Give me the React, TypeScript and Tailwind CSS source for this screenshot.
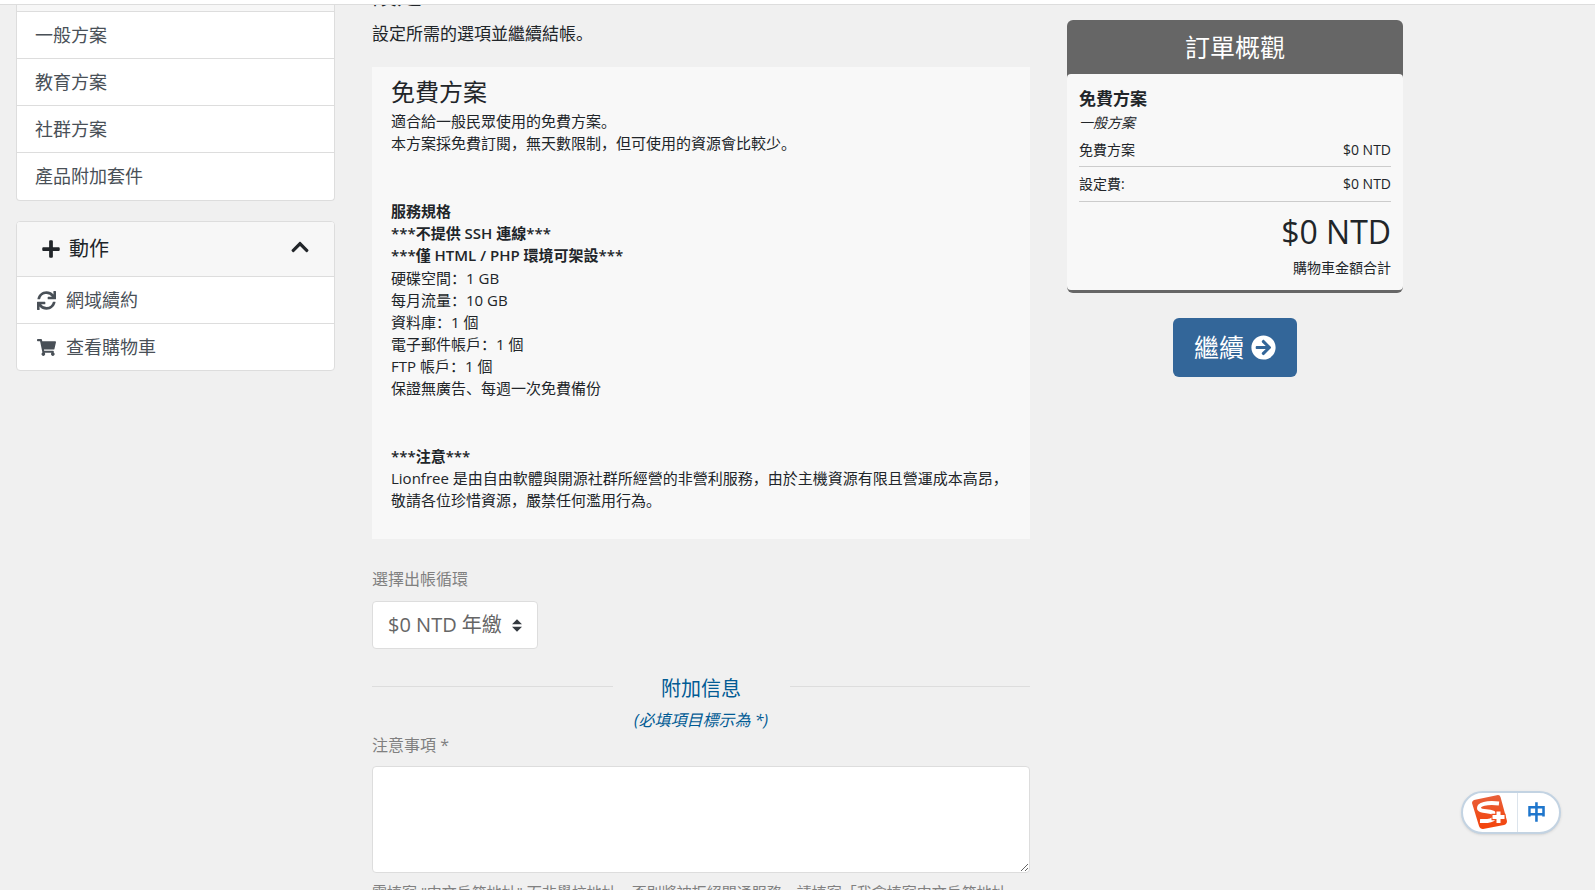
import { useState } from 'react';
import { FaArrowCircleRight, FaChevronUp, FaPlus, FaShoppingCart, FaSync } from 'react-icons/fa';

const categories = ['一般方案', '教育方案', '社群方案', '產品附加套件'];

const actions = [
  { label: '網域續約', icon: FaSync },
  { label: '查看購物車', icon: FaShoppingCart },
];

const specs = [
  '硬碟空間：1 GB',
  '每月流量：10 GB',
  '資料庫：1 個',
  '電子郵件帳戶：1 個',
  'FTP 帳戶：1 個',
  '保證無廣告、每週一次免費備份',
];

const Sidebar = () => {
  const [open, setOpen] = useState(true);

  return (
    <aside className="text-[18px] leading-6 text-[#495057]">
      <nav className="rounded-b border border-t-0 border-[#dddddd] bg-white pb-px">
        <div className="h-[6px] bg-[#f7f7f7]" />
        {categories.map((name) => (
          <a key={name} href="#" className="flex h-[47px] items-center border-t border-[#dddddd] px-[18px]">
            {name}
          </a>
        ))}
      </nav>

      <nav className="mt-5 overflow-hidden rounded border border-[#dddddd] bg-white">
        <button
          type="button"
          onClick={() => setOpen(!open)}
          className="flex h-[54px] w-full items-center bg-[#f7f7f7] px-6 text-[20px] text-[#212529]"
        >
          <FaPlus className="mr-2 size-5" />
          動作
          <FaChevronUp className="mb-1 ml-auto size-5" />
        </button>
        {open &&
          actions.map(({ label, icon: Icon }) => (
            <a key={label} href="#" className="flex h-[47px] items-center gap-2.5 border-t border-[#dddddd] px-5">
              <Icon className="size-[19px]" />
              {label}
            </a>
          ))}
      </nav>
    </aside>
  );
};

const ProductInfo = () => (
  <section className="mt-5 bg-[#f8f8f8] px-[19px] pt-[9px] pb-7 text-[15px] leading-[22px]">
    <h2 className="mb-0.5 text-[24px] leading-8">免費方案</h2>
    <p>
      適合給一般民眾使用的免費方案。
      <br />
      本方案採免費訂閱，無天數限制，但可使用的資源會比較少。
    </p>
    <div className="mt-[46px]">
      <p className="font-semibold">
        服務規格
        <br />
        ***不提供 SSH 連線***
        <br />
        ***僅 HTML / PHP 環境可架設***
      </p>
      <ul className="mt-px">
        {specs.map((spec) => (
          <li key={spec}>{spec}</li>
        ))}
      </ul>
    </div>
    <div className="mt-[46px]">
      <p className="font-semibold">***注意***</p>
      <p>
        Lionfree 是由自由軟體與開源社群所經營的非營利服務，由於主機資源有限且營運成本高昂，
        <br />
        敬請各位珍惜資源，嚴禁任何濫用行為。
      </p>
    </div>
  </section>
);

const OrderSummary = () => (
  <aside className="pt-[15px]">
    <section className="rounded-md bg-[#666666] pb-[3px]">
      <h2 className="py-3 text-center text-[25px] leading-[30px] text-white">訂單概觀</h2>
      <div className="rounded bg-[#f8f8f8] px-3 pt-3 pb-3 text-[14px] leading-5">
        <p className="text-[17px] leading-[26px] font-bold">免費方案</p>
        <p className="leading-[22px] italic">一般方案</p>
        <dl>
          <div className="flex justify-between border-b border-[#cccccc] pt-1.5 pb-1.5">
            <dt>免費方案</dt>
            <dd>$0 NTD</dd>
          </div>
          <div className="flex justify-between border-b border-[#cccccc] pt-[7px] pb-[7px]">
            <dt>設定費:</dt>
            <dd>$0 NTD</dd>
          </div>
        </dl>
        <p className="mt-2 text-right text-[32px] leading-11">$0 NTD</p>
        <p className="mt-1 text-right">購物車金額合計</p>
      </div>
    </section>
    <div className="mt-[25px] text-center">
      <button
        type="button"
        className="inline-flex h-[59px] items-center gap-[7px] rounded-md bg-[#336699] px-[21px] text-[25px] text-white"
      >
        繼續
        <FaArrowCircleRight className="size-[25px]" />
      </button>
    </div>
  </aside>
);

const InputMethodBar = () => (
  <div className="fixed right-[34px] bottom-14 flex h-[43px] w-[100px] items-center rounded-full border-2 border-[#c3d3e2] bg-white shadow-sm">
    <svg viewBox="0 0 36 36" className="mb-0.5 ml-2 size-9">
      <defs>
        <linearGradient id="badge" x1="0" y1="0" x2="0" y2="1">
          <stop offset="0" stopColor="#e8603a" />
          <stop offset="1" stopColor="#f4430a" />
        </linearGradient>
      </defs>
      <path d="M3 6 27 1q2 0 2.500 2L36 27q0 3-3 4L12 35q-3 0-4-3L1 9q0-2 2-3Z" fill="url(#badge)" />
      <path
        d="M28 9.500C15 8 8 10.500 8 14c0 5 16 1.500 16 7.500 0 5-7 6-15 5.500"
        fill="none"
        stroke="#fff"
        strokeWidth="4"
      />
      <path d="M27.500 16v13.500M20.500 23h14" stroke="#f04e1c" strokeWidth="6.500" />
      <path d="M27.500 17.500v11.500M21.500 23h12" stroke="#fff" strokeWidth="4" />
    </svg>
    <span className="ml-2.5 h-full w-px bg-[#dce4ec]" />
    <span className="flex-1 pr-1 text-center text-[20px] leading-6 font-bold text-[#1f76cc]">中</span>
  </div>
);

const App = () => {
  const [notes, setNotes] = useState('');

  return (
    <div className="flex h-screen flex-col overflow-hidden bg-[#f0f0f0] font-['Open_Sans','Noto_Sans_CJK_SC',sans-serif] text-[#212529]">
      <header className="z-10 h-[5px] shrink-0 border-b border-[#dddddd] bg-white" />
      <div className="grid min-h-0 flex-1 grid-cols-[319fr_658fr_336fr] items-start gap-x-[37px] overflow-hidden pr-48 pl-4">
        <Sidebar />

        <main>
          <h1 className="-mt-7 text-[25px] leading-[34px]">設定</h1>
          <p className="mt-2.5 text-[17px] leading-[26px]">設定所需的選項並繼續結帳。</p>
          <ProductInfo />

          <form>
            <label htmlFor="cycle" className="mt-7 block text-[16px] leading-6 text-[#808080]">
              選擇出帳循環
            </label>
            <div className="relative mt-2.5 inline-block">
              <select
                id="cycle"
                className="h-12 appearance-none rounded border border-[#dddddd] bg-white pr-[35px] pl-[15px] text-[20px] text-[#666666]"
              >
                <option>$0 NTD 年繳</option>
              </select>
              <svg viewBox="0 0 4 5" className="pointer-events-none absolute top-[18px] right-4 h-[13px] w-2.5 fill-[#343a40]">
                <path d="M2 0 0 2h4zm0 5L0 3h4z" />
              </svg>
            </div>

            <div className="mt-[25px] flex items-start text-center text-[#015b94]">
              <hr className="mt-3 flex-1 border-[#dddddd]" />
              <h3 className="w-[177px] text-[20px] leading-[30px]">
                附加信息
                <br />
                <i className="text-[16px]">(必填項目標示為 *)</i>
              </h3>
              <hr className="mt-3 flex-1 border-[#dddddd]" />
            </div>

            <label htmlFor="notes" className="block text-[16px] leading-5 text-[#808080]">
              注意事項 *
            </label>
            <textarea
              id="notes"
              value={notes}
              onChange={(event) => setNotes(event.target.value)}
              className="mt-[11px] block h-[107px] w-full rounded border border-[#dddddd] bg-white p-3"
            />
            <p className="mt-[7px] text-[15px] leading-6 whitespace-nowrap text-[#808080]">
              需填寫 "中文戶籍地址" 而非學校地址，否則將被拒絕開通服務，請填寫「我會填寫中文戶籍地址
            </p>
          </form>
        </main>

        <OrderSummary />
      </div>
      <InputMethodBar />
    </div>
  );
};

export default App;
